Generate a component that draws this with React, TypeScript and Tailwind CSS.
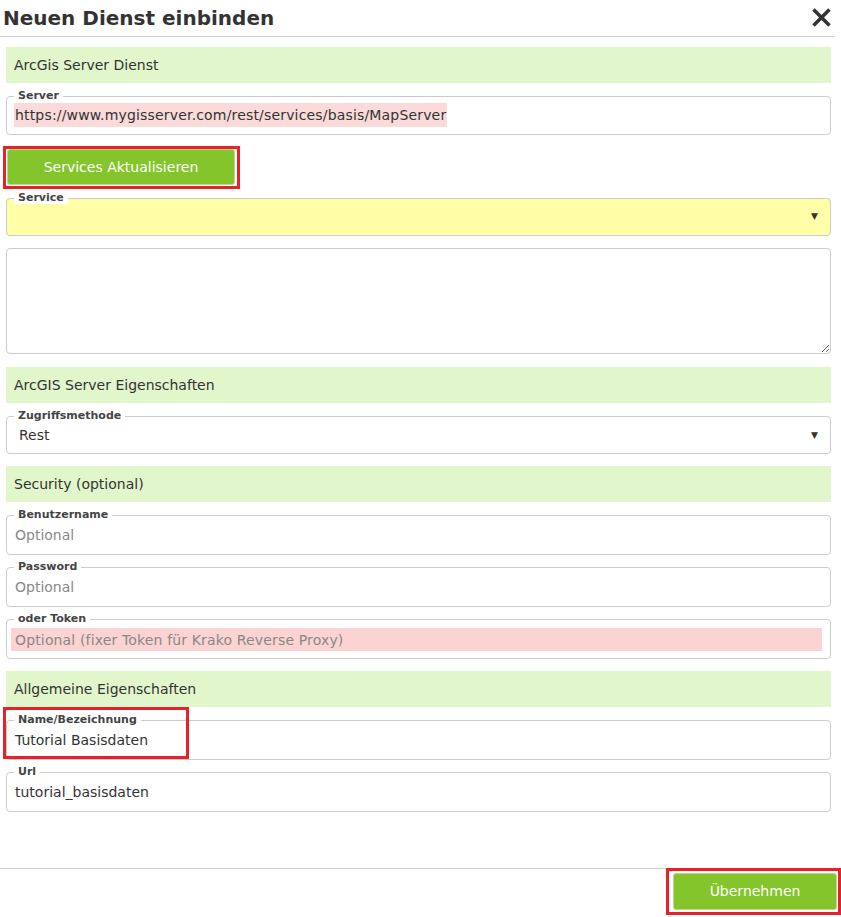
import type { ReactNode } from 'react'

const font = { fontFamily: '"DejaVu Sans", Verdana, sans-serif' }

function SectionHeader({ title, className = '' }: { title: string; className?: string }) {
  return (
    <div className={`h-[36px] bg-[#e2f6cb] flex items-center px-[8px] pt-[1px] text-[14px] text-[#333] ${className}`}>
      {title}
    </div>
  )
}

function Field({
  label,
  children,
  className = '',
  bg = 'bg-white',
}: {
  label: string
  children: ReactNode
  className?: string
  bg?: string
}) {
  return (
    <fieldset className={`border border-[#ccc] rounded-[4px] pl-[7px] pr-[7px] pb-[7px] ${bg} ${className}`}>
      <legend className="ml-0 px-[4px] text-[11px] leading-[12px] font-bold text-[#444] bg-white">{label}</legend>
      {children}
    </fieldset>
  )
}

function Arrow() {
  return <span className="text-[9px] leading-none text-[#333] mr-[5px]">▼</span>
}

export default function App() {
  return (
    <div className="h-[917px] w-[841px] bg-white flex flex-col overflow-hidden" style={font}>
      {/* Title */}
      <div className="h-[37px] mr-[6px] border-b border-[#ccc] flex items-center justify-between pl-[3px] pr-[3px]">
        <h1 className="text-[20px] font-bold text-[#333] leading-none pb-[1px]">Neuen Dienst einbinden</h1>
        <button aria-label="Schließen" className="w-[22px] h-[22px] flex items-center justify-center mb-[2px]">
          <svg width="21" height="21" viewBox="0 0 21 21">
            <path d="M2.5 2.5 L18.5 18.5 M18.5 2.5 L2.5 18.5" stroke="#333" strokeWidth="3.6" strokeLinecap="butt" />
          </svg>
        </button>
      </div>

      <div className="flex-1 flex flex-col pl-[6px] pr-[10px]">
        <SectionHeader title="ArcGis Server Dienst" className="mt-[10px]" />

        <Field label="Server" className="mt-[7px]">
          <div className="mt-[1px] h-[24px] flex items-center">
            <span className="bg-[#fbdada] h-[24px] flex items-center px-[1px] pt-[1px] text-[14px] tracking-[0.17px] text-[#333]">
              https://www.mygisserver.com/rest/services/basis/MapServer
            </span>
          </div>
        </Field>

        <div className="mt-[11px] -ml-[3px] w-[237px] h-[43px] border-[3px] border-[#e8202a] pl-[1px] pr-[2px] pt-0 pb-[1px]">
          <button className="w-full h-[36px] bg-[#84c52b] border border-[#b8d88e] rounded-[3px] text-white text-[14px]">
            Services Aktualisieren
          </button>
        </div>

        <Field label="Service" className="mt-[3px]" bg="bg-[#ffffa8]">
          <div className="h-[24px] flex items-center justify-end">
            <Arrow />
          </div>
        </Field>

        <textarea className="mt-[12px] h-[106px] border border-[#ccc] rounded-[4px] bg-white" />

        <SectionHeader title="ArcGIS Server Eigenschaften" className="mt-[13px]" />

        <Field label="Zugriffsmethode" className="mt-[7px]">
          <div className="h-[24px] flex items-center justify-between pl-[5px] pt-[2px] text-[14px] text-[#333]">
            <span>Rest</span>
            <Arrow />
          </div>
        </Field>

        <SectionHeader title="Security (optional)" className="mt-[12px]" />

        <Field label="Benutzername" className="mt-[7px]">
          <div className="h-[26px] flex items-center pl-[1px] pt-[2px] text-[14px] text-[#888]">Optional</div>
        </Field>

        <Field label="Password" className="mt-[6px]">
          <div className="h-[26px] flex items-center pl-[1px] pt-[2px] text-[14px] text-[#888]">Optional</div>
        </Field>

        <Field label="oder Token" className="mt-[6px]">
          <div className="mt-[3px] h-[23px] -ml-[3px] mr-[1px] bg-[#fbd3d3] flex items-center pl-[4px] pt-[1px] text-[14px] tracking-[0.15px] text-[#888]">
            Optional (fixer Token für Krako Reverse Proxy)
          </div>
        </Field>

        <SectionHeader title="Allgemeine Eigenschaften" className="mt-[12px]" />

        <div className="relative mt-[7px]">
          <Field label="Name/Bezeichnung">
            <div className="h-[26px] flex items-center pl-[1px] pt-[2px] text-[14px] text-[#333]">Tutorial Basisdaten</div>
          </Field>
          <div className="absolute -top-[7px] -left-[3px] w-[186px] h-[52px] border-[3px] border-[#e8202a] pointer-events-none" />
        </div>

        <Field label="Url" className="mt-[6px]">
          <div className="h-[26px] flex items-center pl-[1px] pt-[2px] text-[14px] text-[#333]">tutorial_basisdaten</div>
        </Field>
      </div>

      {/* Footer */}
      <div className="h-[49px] border-t border-[#ccc] flex justify-end">
        <div className="-mt-[1px] w-[175px] h-[47px] border-[3px] border-[#e8202a] pl-[4px] pr-[1px] pt-[2px]">
          <button className="w-full h-[37px] bg-[#84c52b] border border-[#b8d88e] rounded-[3px] text-white text-[14px]">
            Übernehmen
          </button>
        </div>
      </div>
    </div>
  )
}
